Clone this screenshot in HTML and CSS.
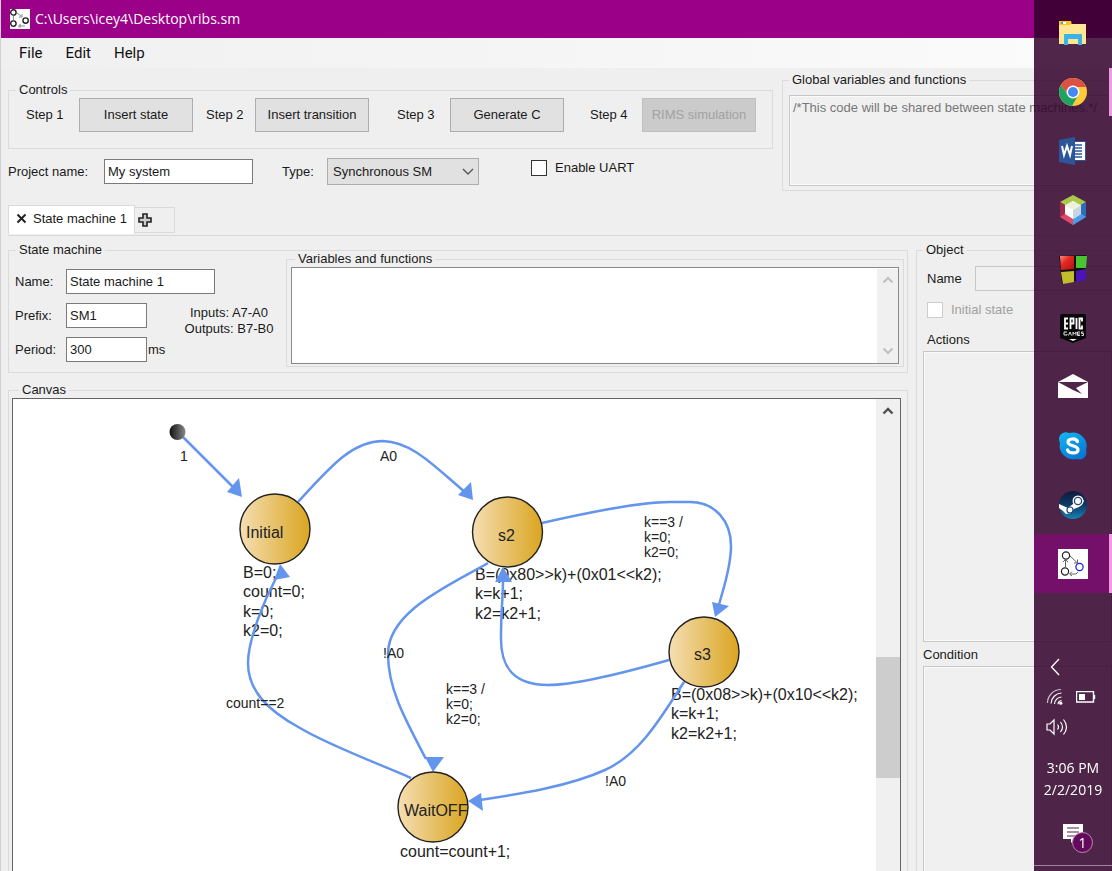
FILE: index.html
```html
<!DOCTYPE html>
<html lang="en">
<head>
<meta charset="utf-8">
<title>C:\Users\icey4\Desktop\ribs.sm</title>
<link rel="stylesheet" href="styles.css">
</head>
<body>
<div class="window">
  <header class="titlebar">
    <svg width="20" height="20" viewBox="0 0 20 20" aria-hidden="true">
      <rect width="20" height="20" fill="#fff"/>
      <g fill="none" stroke="#222" stroke-width="1.4">
        <circle cx="3.4" cy="3.4" r="2.7"/><circle cx="3.4" cy="14.6" r="2.7"/><circle cx="15.6" cy="11.6" r="2.7"/>
      </g>
      <path d="M7 4l4 3M9 8h3V5M3.4 7v4M15 17H8m2-2v4" fill="none" stroke="#888"/>
    </svg>
    <h1 class="title">C:\Users\icey4\Desktop\ribs.sm</h1>
  </header>
  <nav class="menubar">
    <button class="menu">File</button>
    <button class="menu">Edit</button>
    <button class="menu">Help</button>
  </nav>

  <div class="top">
    <div>
      <fieldset class="group">
        <legend>Controls</legend>
        <div class="steps">
          <span>Step 1</span><button class="btn">Insert state</button>
          <span>Step 2</span><button class="btn">Insert transition</button>
          <span>Step 3</span><button class="btn">Generate C</button>
          <span>Step 4</span><button class="btn" disabled>RIMS simulation</button>
        </div>
      </fieldset>
      <div class="project">
        <label for="project">Project name:</label>
        <input class="field name-field" id="project" type="text" value="My system">
        <label for="type">Type:</label>
        <span class="select-wrap">
          <select class="select" id="type"><option>Synchronous SM</option></select>
          <svg class="caret" width="12" height="8" viewBox="0 0 12 8" aria-hidden="true"><path d="M1 1l5 5 5-5" fill="none" stroke="#555" stroke-width="1.4"/></svg>
        </span>
        <label class="check"><input type="checkbox"> Enable UART</label>
      </div>
    </div>
    <fieldset class="group global">
      <legend><label for="globals">Global variables and functions</label></legend>
      <textarea class="area globals" id="globals" disabled>/*This code will be shared between state machines.*/</textarea>
    </fieldset>
  </div>

  <div class="tabs">
    <button class="tab active"><svg width="11" height="11" viewBox="0 0 11 11" aria-hidden="true"><path d="M1.500 1.500l8 8M9.500 1.500l-8 8" stroke="#222" stroke-width="2"/></svg>State machine 1</button>
    <button class="tab add" aria-label="Add state machine"><svg width="14" height="14" viewBox="0 0 14 14" aria-hidden="true"><path d="M5 1h4v4h4v4H9v4H5V9H1V5h4z" fill="#ccc" stroke="#222" stroke-width="1.600"/></svg></button>
  </div>

  <main class="page">
    <div class="left">
      <fieldset class="group">
        <legend>State machine</legend>
        <div class="machine">
          <div class="form">
            <label for="name">Name:</label><input class="field name-field" id="name" type="text" value="State machine 1">
            <label for="prefix">Prefix:</label><input class="field short" id="prefix" type="text" value="SM1">
            <label for="period">Period:</label><span class="period"><input class="field short" id="period" type="text" value="300">ms</span>
          </div>
          <p class="ports">Inputs: A7-A0<br>Outputs: B7-B0</p>
          <fieldset class="group vars">
            <legend><label for="vars">Variables and functions</label></legend>
            <div class="vars-box">
              <textarea class="vars-text" id="vars"></textarea>
              <div class="scroll idle">
                <svg width="12" height="8" viewBox="0 0 12 8" aria-hidden="true"><path d="M1.500 6.500L6 2l4.500 4.500" fill="none" stroke="#bfbfbf" stroke-width="2"/></svg>
                <svg width="12" height="8" viewBox="0 0 12 8" aria-hidden="true"><path d="M1.500 1.500L6 6l4.500-4.500" fill="none" stroke="#bfbfbf" stroke-width="2"/></svg>
              </div>
            </div>
          </fieldset>
        </div>
      </fieldset>

      <fieldset class="group canvas-group">
        <legend>Canvas</legend>
        <div class="canvas">
          <svg class="diagram" width="863" height="480" viewBox="13 400 863 480" role="img" aria-label="State diagram">
            <defs>
              <linearGradient id="gold"><stop offset="0" stop-color="#f5deb3"/><stop offset="1" stop-color="#daa520"/></linearGradient>
              <linearGradient id="dark"><stop offset="0" stop-color="#111"/><stop offset="1" stop-color="#888"/></linearGradient>
            </defs>
            <g class="action">
              <text><tspan x="243" y="579">B=0;</tspan><tspan x="243" y="598">count=0;</tspan><tspan x="243" y="618">k=0;</tspan><tspan x="243" y="637">k2=0;</tspan></text>
              <text><tspan x="475" y="581">B=(0x80&gt;&gt;k)+(0x01&lt;&lt;k2);</tspan><tspan x="475" y="600">k=k+1;</tspan><tspan x="475" y="620">k2=k2+1;</tspan></text>
              <text><tspan x="671" y="701">B=(0x08&gt;&gt;k)+(0x10&lt;&lt;k2);</tspan><tspan x="671" y="720">k=k+1;</tspan><tspan x="671" y="740">k2=k2+1;</tspan></text>
              <text x="400" y="858">count=count+1;</text>
            </g>
            <g class="edge">
              <path d="M182 437L236 491"/>
              <path d="M298 503C330 468 352 442 383 442C413 443 435 468 466 494"/>
              <path d="M542 524C590 513 640 503 670 503H690C715 503 731 522 731 547C731 570 722 593 719 606"/>
              <path d="M669 661C620 675 575 686 548 686C515 686 501 670 501 640C501 610 503 600 503 580"/>
              <path d="M488 564C450 586 388 612 388 655C388 690 405 720 426 760"/>
              <path d="M411 779C380 765 330 747 300 729C265 710 248 690 248 664C248 640 265 600 276 579"/>
              <path d="M684 683C660 720 640 755 605 771C570 787 520 795 480 801"/>
            </g>
            <g class="head">
              <path d="M242 498L227 493L239 479z"/><path d="M473 501L458 496L471 483z"/>
              <path d="M715 618L712 603L729 607z"/><path d="M503 568L495 583L512 583z"/>
              <path d="M433 773L425 758L444 758z"/><path d="M280 565L274 581L290 578z"/>
              <path d="M468 802L481 794L483 812z"/>
            </g>
            <g class="label">
              <text x="180" y="462">1</text><text x="380" y="462">A0</text><text x="383" y="659">!A0</text>
              <text x="605" y="787">!A0</text><text x="226" y="709">count==2</text>
              <text><tspan x="644" y="528">k==3 /</tspan><tspan x="644" y="543">k=0;</tspan><tspan x="644" y="558">k2=0;</tspan></text>
              <text><tspan x="446" y="695">k==3 /</tspan><tspan x="446" y="710">k=0;</tspan><tspan x="446" y="725">k2=0;</tspan></text>
            </g>
            <circle cx="177.500" cy="433" r="8" fill="url(#dark)"/>
            <g class="state">
              <circle cx="275" cy="530" r="35"/><circle cx="507.500" cy="533" r="35"/>
              <circle cx="704" cy="653" r="35"/><circle cx="433" cy="808" r="35"/>
            </g>
            <g class="action">
              <text x="246" y="539">Initial</text><text x="498" y="542">s2</text>
              <text x="694" y="661">s3</text><text x="404" y="817">WaitOFF</text>
            </g>
          </svg>
          <div class="scroll track">
            <svg width="12" height="8" viewBox="0 0 12 8" aria-hidden="true"><path d="M1.500 6.500L6 2l4.500 4.500" fill="none" stroke="#505050" stroke-width="2.400"/></svg>
            <span></span>
            <div class="thumb"></div>
          </div>
        </div>
      </fieldset>
    </div>

    <fieldset class="group object">
      <legend>Object</legend>
      <div class="object-name"><label for="objname">Name</label><input class="field off" id="objname" type="text" disabled></div>
      <label class="check off-text"><input type="checkbox" disabled> Initial state</label>
      <label class="caption" for="actions">Actions</label>
      <textarea class="area actions" id="actions" disabled></textarea>
      <label class="caption condition" for="condition">Condition</label>
      <textarea class="area actions" id="condition" disabled></textarea>
    </fieldset>
  </main>
</div>

<aside class="taskbar">
  <button class="app" aria-label="File Explorer"><svg width="30" height="30" viewBox="0 0 30 30">
    <path d="M1 3h12v3h15v20H1z" fill="#ffe694"/><path d="M1 3h11l2 2-2 2H1z" fill="#fcc41c"/><path d="M3 4h5v2H3z" fill="#fff"/><path d="M3 4h2v2H3z" fill="#31a8d8"/>
    <path d="M6 27V17q0-1 1-1h16q1 0 1 1v10h-4v-6H10v6z" fill="#3bb3e8"/></svg></button>
  <button class="app open" aria-label="Chrome"><svg width="30" height="30" viewBox="0 0 30 30">
    <circle cx="15" cy="15" r="14" fill="#ffca3a"/>
    <path d="M2.900 8A14 14 0 0 1 28 10H15a6 6 0 0 0-5.200 8z" fill="#dd5144"/>
    <path d="M2.900 8A14 14 0 0 0 14 29l6-10.500a6 6 0 0 1-10.200-.5z" fill="#1da362"/>
    <circle cx="15" cy="15" r="6.500" fill="#fff"/><circle cx="15" cy="15" r="5" fill="#4587f3"/></svg></button>
  <button class="app" aria-label="Word"><svg width="30" height="30" viewBox="0 0 30 30">
    <path d="M15 5h13v20H15z" fill="#2a5699"/><path d="M16 6h11v18H16z" fill="#fff"/>
    <path d="M17 9h7M17 12h7M17 15h7M17 18h7M17 21h7" stroke="#2a5699" stroke-width="1.300"/>
    <path d="M1 4l16-3v28L1 26z" fill="#2b579a"/><path d="M4 10l2 9 3-9 3 9 2-9" fill="none" stroke="#fff" stroke-width="2"/></svg></button>
  <button class="app" aria-label="NetBeans"><svg width="30" height="30" viewBox="0 0 30 30">
    <path d="M15 0l13 7-13 8L2 7z" fill="#acc84b"/><path d="M2 7l13 8v15L2 22z" fill="#9c2a4a"/><path d="M2 22l7-4 6 4v8z" fill="#e0496c"/>
    <path d="M28 7v15l-13 8V15z" fill="#2d6dbd"/><path d="M28 22l-6-4-7 4v8z" fill="#4b9ae5"/>
    <path d="M15 6l8 4.500v8.500l-8 5-8-5v-8.500z" fill="#fff"/><path d="M15 6l8 4.500-8 4.500-8-4.500z" fill="#eef2dc"/><path d="M15 15l8-4.500V19l-8 5z" fill="#cbd5df"/></svg></button>
  <button class="app" aria-label="Code::Blocks"><svg width="30" height="30" viewBox="0 0 30 30">
    <defs><linearGradient id="red" x1="0" y1="0" x2="1" y2="1"><stop offset="0" stop-color="#ff8a80"/><stop offset=".4" stop-color="#e22a22"/><stop offset="1" stop-color="#b31212"/></linearGradient></defs>
    <path d="M1 2l27-1v24L4 30z" fill="#151010"/><path d="M2 2h14v13L3 16z" fill="url(#red)"/><path d="M18 2h11l-1 12H18z" fill="#48c431"/>
    <path d="M3 18l13-1v11L5 30z" fill="#c4bd2d"/><path d="M18 17l10-2v11l-10 2z" fill="#4a14b8"/></svg></button>
  <button class="app" aria-label="Epic Games"><svg width="30" height="30" viewBox="0 0 30 30">
    <path d="M2 3q0-2 2-2h22q2 0 2 2v22l-13 5-13-5z" fill="#080808"/>
    <g fill="none" stroke="#fff" stroke-width="1.800"><path d="M10 5.500H7v10h3M7 10.500h3M12.500 16V5.500h3v5h-3M18.500 5v11M24 8.500v-3h-2.500v10H24v-3"/></g>
    <g fill="none" stroke="#ddd" stroke-width="1"><path d="M9 19H6v3h3v-1M10.500 22.500l1.500-3.500 1.500 3.500M15 22.500V19l1.500 2 1.500-2v3.500M22 19h-2.500v3.500H22M19.500 21H22M25.500 19h-2v1.500h2v2h-2"/></g>
    <path d="M11 26h8l-4 2z" fill="#fff"/></svg></button>
  <button class="app" aria-label="Mail"><svg width="30" height="30" viewBox="0 0 30 30">
    <path d="M0 10L15 2l15 8v16H0z" fill="#fff"/><path d="M0 10h30L18 16l6 6-9-4z" fill="#4e2448"/></svg></button>
  <button class="app" aria-label="Skype"><svg width="30" height="30" viewBox="0 0 30 30">
    <defs><linearGradient id="sky" x1="0" y1="0" x2=".6" y2="1"><stop offset="0" stop-color="#12b8f2"/><stop offset="1" stop-color="#0878d4"/></linearGradient></defs>
    <path d="M1 7a7 7 0 0 1 10-5A14 13.500 0 0 1 28 19a7 7 0 0 1-9 9A14 13.500 0 0 1 2 12a9 9 0 0 1-1-5z" fill="url(#sky)"/>
    <path d="M19.500 10.500C18 7 10 7 10 11.300c0 4.200 10 2.700 10 7.400 0 4.300-9 4.300-10.500.3" fill="none" stroke="#fff" stroke-width="3.200" stroke-linecap="round"/></svg></button>
  <button class="app" aria-label="Steam"><svg width="30" height="30" viewBox="0 0 30 30">
    <defs><linearGradient id="stm" x1="0" y1="0" x2="0" y2="1"><stop offset="0" stop-color="#111a3c"/><stop offset=".5" stop-color="#0c3a66"/><stop offset="1" stop-color="#1585b5"/></linearGradient></defs>
    <circle cx="15" cy="15" r="14" fill="url(#stm)"/>
    <path d="M1 14l9 4 5-4 2-6 5-2 4 5-5 6-5 2-3 4-5 1-3-3-4-3z" fill="#fff"/>
    <circle cx="20" cy="11" r="5.500" fill="#fff"/><circle cx="20" cy="11" r="3.600" fill="#fff" stroke="#23466f" stroke-width="1.300"/><circle cx="12" cy="20" r="3" fill="#fff" stroke="#23466f" stroke-width="1.200"/></svg></button>
  <button class="app open current" aria-label="RIBS"><svg width="30" height="30" viewBox="0 0 30 30">
    <rect width="30" height="30" fill="#fff"/>
    <g fill="none" stroke="#222" stroke-width="1.200"><circle cx="8" cy="6.500" r="3.600"/><circle cx="7" cy="22.500" r="3.600"/><circle cx="21.500" cy="18" r="3.600" stroke="#1818e0"/></g>
    <path d="M7.500 11v7M5 13l2.500-2.500L10 13M12 7l7.500 7M19.500 10.500V14H16M20 23l-2 2h-6M14 22.500L11.500 25l2.500 2" fill="none" stroke="#666"/></svg></button>

  <div class="tray">
    <div class="tray-row"><svg width="10" height="18" viewBox="0 0 10 18"><path d="M9 1L1.500 9 9 17" fill="none" stroke="#fff" stroke-width="1.300"/></svg></div>
    <div class="tray-row">
      <svg width="18" height="18" viewBox="0 0 18 18"><g fill="none" stroke="#fff" stroke-width="1.200"><path d="M1.500 15A13.500 13.500 0 0 1 15 1.500" opacity=".7"/><path d="M5 15.500A11 11 0 0 1 15.500 5M8.500 16a7.500 7.500 0 0 1 7-7M12 16.200a4 4 0 0 1 3.500-3.700"/></g><circle cx="14.800" cy="15.200" r="1.600" fill="#fff"/></svg>
      <svg width="20" height="12" viewBox="0 0 20 12"><path d="M.5.500h17v10.500H.5zM18.500 4v4" fill="none" stroke="#fff" stroke-width="1.400"/><path d="M3 3h6v6H3z" fill="#fff"/></svg>
    </div>
    <div class="tray-row"><svg width="22" height="18" viewBox="0 0 22 18"><path d="M1 6h3l4-4v14l-4-4H1zM11.500 6.500q2 2.500 0 5M14.500 4q4 5 0 10M17.500 1.500q6 7.500 0 15" fill="none" stroke="#fff" stroke-width="1.200"/></svg></div>
    <div class="clock">3:06 PM<br>2/2/2019</div>
    <button class="notify" aria-label="Notifications"><svg width="20" height="20" viewBox="0 0 20 20"><path d="M0 1h20v15h-8l-4 4v-4H0z" fill="#fff"/><path d="M4 5h12M4 9h12M4 13h9" stroke="#4e2448" stroke-width="1.200"/></svg><span class="badge">1</span></button>
    <div class="desktop"></div>
  </div>
</aside>
</body>
</html>
```
FILE: styles.css
```css
* { box-sizing: border-box; }
body { margin: 0; background: #efefef; color: #1a1a1a; font: 13px/16px "Liberation Sans", Arial, sans-serif; overflow: hidden; }
button, input, select, textarea { font: inherit; color: inherit; border-radius: 0; }
button { border: 0; background: none; padding: 0; }

.window { height: 100vh; overflow: hidden; display: flex; flex-direction: column; border-left: 1px solid #d0d0d0; }
.titlebar { flex: none; height: 38px; margin-left: -1px; padding-left: 10px; display: flex; align-items: center; gap: 5px; background: #9b0089; color: #fff; }
.title { margin: 0; font: 14px/20px "Open Sans", "Noto Sans", sans-serif; }
.menubar { flex: none; height: 30px; padding-left: 18px; display: flex; gap: 23px; background: linear-gradient(90deg, #f0f0f0, #fbfbfb); }
.menu { font: 15px/20px Roboto, "Liberation Sans", sans-serif; color: #111; }

.group { margin: 0; padding: 0; min-width: 0; border: 1px solid #dbdbdb; }
.group > legend { margin-left: 7px; padding: 0 3px; line-height: 16px; }

.top { flex: none; display: grid; grid-template-columns: minmax(0, 1fr) 330px; gap: 9px; padding-left: 7px; }
.top > div { padding-top: 14px; }
.steps { display: grid; grid-template-columns: 53px 127px 49px 142px 53px 140px 52px 114px; align-items: center; padding: 0 0 16px 17px; }
.btn { width: 114px; height: 34px; background: #e1e1e1; border: 1px solid #adadad; }
.btn:disabled { background: #cbcbcb; border-color: #bfbfbf; color: #a2a2a2; }
.project { display: grid; grid-template-columns: 96px 178px 45px 204px auto; align-items: center; height: 27px; margin-top: 9px; }
.field { height: 25px; padding: 0 3px; border: 1px solid #7a7a7a; background: #fff; }
.name-field { width: 149px; }
.short { width: 81px; }
.select-wrap { position: relative; width: 152px; }
.select { width: 100%; height: 27px; padding: 0 5px; appearance: none; background: #e1e1e1; border: 1px solid #adadad; }
.caret { position: absolute; right: 5px; top: 10px; }
.check { display: flex; align-items: center; gap: 8px; line-height: 20px; }
.project .check { align-self: start; }
.check input { appearance: none; width: 16px; height: 16px; margin: 0; background: #fff; border: 1px solid #333; }
.check input:disabled { border-color: #ccc; }
.off-text { color: #a0a0a0; }

.global { margin-top: 4px; border-right: 0; }
.global > legend { margin-left: 6px; }
.area { display: block; width: 100%; padding: 4px; resize: none; background: #f0f0f0; border: 1px solid #c8c8c8; box-shadow: inset 0 0 0 1px #fafafa; color: #777; }
.globals { height: 91px; margin: 7px 0 4px 6px; padding: 4px 3px; white-space: nowrap; overflow: hidden; }

.tabs { flex: none; display: flex; align-items: flex-start; margin: 14px 0 0 7px; height: 31px; border-bottom: 1px solid #dadada; }
.tab { display: flex; align-items: center; border: 1px solid #dadada; }
.active { width: 127px; height: 29px; padding: 0 0 3px 7px; gap: 6px; background: #fff; border-bottom: 0; }
.add { width: 40px; height: 26px; margin-top: 2px; padding-left: 3px; border-left: 0; }

.page { flex: 1; min-height: 0; display: grid; grid-template-columns: minmax(0, 1fr) 196px; gap: 8px; padding: 6px 0 0 7px; }
.left { display: flex; flex-direction: column; gap: 9px; min-width: 0; }
.machine { display: flex; padding: 0 3px 5px 6px; }
.form { flex: none; display: grid; grid-template-columns: 51px 149px; row-gap: 9px; align-items: center; align-content: start; padding-top: 11px; }
.period { display: flex; align-items: center; gap: 1px; }
.ports { flex: none; width: 92px; margin: 47px 11px 0 -32px; text-align: center; white-space: nowrap; }
.vars { flex: 1; margin-top: -7px; padding: 0 4px 2px; }
.vars > legend { margin-left: 4px; }
.vars-box { display: flex; height: 97px; background: #fff; border: 1px solid #8a8a8a; }
.vars-text { flex: 1; border: 0; resize: none; background: #fff; outline: 0; }
.scroll { flex: none; background: #f0f0f0; display: grid; justify-items: center; }
.idle { width: 21px; margin-top: 1px; padding: 7px 0 8px; align-content: space-between; }

.canvas-group { flex: 1; min-height: 0; border-bottom: 0; padding: 0 6px 0 3px; }
.canvas { display: flex; height: 481px; background: #fff; border: 1px solid #646464; border-bottom: 0; }
.diagram { flex: none; margin-right: auto; font-family: "Liberation Sans", Arial, sans-serif; }
.action { font-size: 16px; fill: #222; }
.label { font-size: 14px; fill: #222; }
.edge { fill: none; stroke: #6495ed; stroke-width: 2.5px; }
.head { fill: #6495ed; }
.state { fill: url(#gold); stroke: #222; stroke-width: 1.4px; }
.track { width: 24px; grid-template-rows: 25px 234fr 121fr 101fr; }
.track svg { margin-top: 8px; }
.thumb { width: 100%; background: #cdcdcd; }

.object { height: 700px; border-right: 0; padding-left: 6px; }
.object > legend { margin-left: 0; }
.object-name { display: grid; grid-template-columns: 48px 1fr; align-items: center; margin: 8px 0 9px 4px; }
.off { background: #f0f0f0; border-color: #c8c8c8; }
.object .check { margin-left: 4px; }
.caption { display: block; margin: 12px 0 0 4px; line-height: 16px; }
.actions { height: 291px; margin-top: 3px; }
.condition { margin: 5px 0 0; }

.taskbar { position: fixed; inset: 0 0 0 auto; width: 78px; padding-top: 3px; display: flex; flex-direction: column; background: rgba(49, 0, 42, .85); color: #fff; font: 14px/22px "Open Sans", "Noto Sans", sans-serif; }
.app { flex: none; height: 59px; display: grid; place-items: center; }
.open { background: linear-gradient(#ee9be4, #ee9be4) right center / 3px 48px no-repeat; }
.current { background: linear-gradient(#ee9be4, #ee9be4) right center / 3px 100% no-repeat #740f6a; }
.tray { margin-top: auto; display: flex; flex-direction: column; }
.tray-row { height: 30px; padding-left: 12px; display: flex; align-items: center; gap: 12px; }
.tray-row:first-child { padding-left: 16px; }
.clock { margin-top: 15px; text-align: center; }
.notify { position: relative; align-self: center; width: 20px; height: 20px; margin: 22px 0; display: grid; color: #fff; }
.badge { position: absolute; left: 9px; top: 9px; width: 21px; height: 21px; border: 1px solid #b58ab0; border-radius: 50%; background: #640a5c; line-height: 19px; text-align: center; }
.desktop { height: 6px; border-top: 1px solid #a184a0; }
```
